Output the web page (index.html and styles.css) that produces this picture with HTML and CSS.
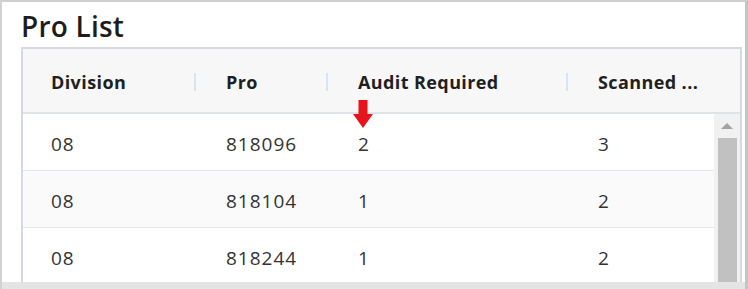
FILE: index.html
```html
<!DOCTYPE html>
<html>
<head>
<meta charset="utf-8">
<link rel="stylesheet" href="styles.css">
</head>
<body>
<div class="frame">
  <div class="panel">
    <h1 class="title">Pro List</h1>
    <div class="grid">
      <div class="head">
        <div class="hcell c1">Division</div>
        <div class="hcell c2">Pro</div>
        <div class="hcell c3">Audit Required</div>
        <div class="hcell c4 last">Scanned ...</div>
      </div>
      <div class="body">
        <div class="rows">
          <div class="row">
            <div class="cell c1">08</div>
            <div class="cell c2">818096</div>
            <div class="cell c3 marked">2<svg class="arrow" width="20" height="28" viewBox="0 0 20 28"><path d="M5.5 0H14.5V14H20L10 28L0 14H5.5Z" fill="#e8141b"/></svg></div>
            <div class="cell c4">3</div>
          </div>
          <div class="row alt">
            <div class="cell c1">08</div>
            <div class="cell c2">818104</div>
            <div class="cell c3">1</div>
            <div class="cell c4">2</div>
          </div>
          <div class="row">
            <div class="cell c1">08</div>
            <div class="cell c2">818244</div>
            <div class="cell c3">1</div>
            <div class="cell c4">2</div>
          </div>
        </div>
        <div class="scrollbar">
          <div class="up"></div>
          <div class="thumb"></div>
        </div>
      </div>
    </div>
  </div>
  <div class="bottom"></div>
</div>
</body>
</html>
```
FILE: styles.css
```css
html, body {
  margin: 0;
  padding: 0;
  background: #ffffff;
}
body {
  font-family: "Open Sans", "Liberation Sans", sans-serif;
  color: #222;
  width: 748px;
  height: 289px;
  overflow: hidden;
}
.frame {
  display: flex;
  flex-direction: column;
  height: 289px;
  border-top: 2px solid #cfcfcf;
  border-left: 2px solid #d2d2d2;
  border-right: 3px solid #c4c4c4;
  box-sizing: border-box;
  background: #fff;
}
.panel {
  height: 280px;
  overflow: hidden;
  padding: 0 3px 0 19px;
  display: flex;
  flex-direction: column;
}
.title {
  margin: 0;
  height: 45px;
  font-size: 28px;
  font-weight: 600;
  line-height: 49px;
  color: #1d1d1d;
  letter-spacing: 0.2px;
}
.grid {
  border: 2px solid #d5d9e0;
  border-bottom: none;
  flex: 1;
  display: flex;
  flex-direction: column;
}
.head {
  display: grid;
  grid-template-columns: 173px 132px 240px 1fr;
  height: 63px;
  background: #f7f7f7;
  border-bottom: 2px solid #dfe2e8;
}
.hcell {
  position: relative;
  display: flex;
  align-items: center;
  padding-left: 30px;
  padding-top: 2px;
  font-size: 18px;
  font-weight: 700;
  letter-spacing: 0.4px;
  color: #1f1f1f;
}
.hcell.c1 { padding-left: 28px; }
.hcell::after {
  content: "";
  position: absolute;
  right: 0;
  top: 24px;
  width: 2px;
  height: 18px;
  background: #dde3ec;
}
.hcell.last::after { display: none; }
.body {
  display: flex;
  flex: 1;
}
.rows {
  flex: 1;
}
.row {
  display: grid;
  grid-template-columns: 173px 132px 240px 1fr;
  height: 56px;
  border-bottom: 1px solid #e3e6ec;
  background: #fff;
}
.row.alt { background: #fafafa; }
.cell {
  display: flex;
  align-items: center;
  padding-left: 30px;
  padding-top: 3px;
  font-size: 19px;
  letter-spacing: 1px;
  color: #333;
}
.cell.c1 { padding-left: 28px; }
.marked { position: relative; }
.arrow {
  position: absolute;
  left: 25px;
  top: -14px;
}
.scrollbar {
  width: 26px;
  background: #f1f1f1;
  display: flex;
  flex-direction: column;
  align-items: center;
}
.up {
  margin-top: 9px;
  width: 0;
  height: 0;
  border-left: 6px solid transparent;
  border-right: 6px solid transparent;
  border-bottom: 6px solid #a3a3a3;
}
.thumb {
  margin-top: 9px;
  width: 19px;
  flex: 1;
  background: #c1c1c1;
}
.bottom {
  flex: 1;
  background: #e4e4e4;
}
```
